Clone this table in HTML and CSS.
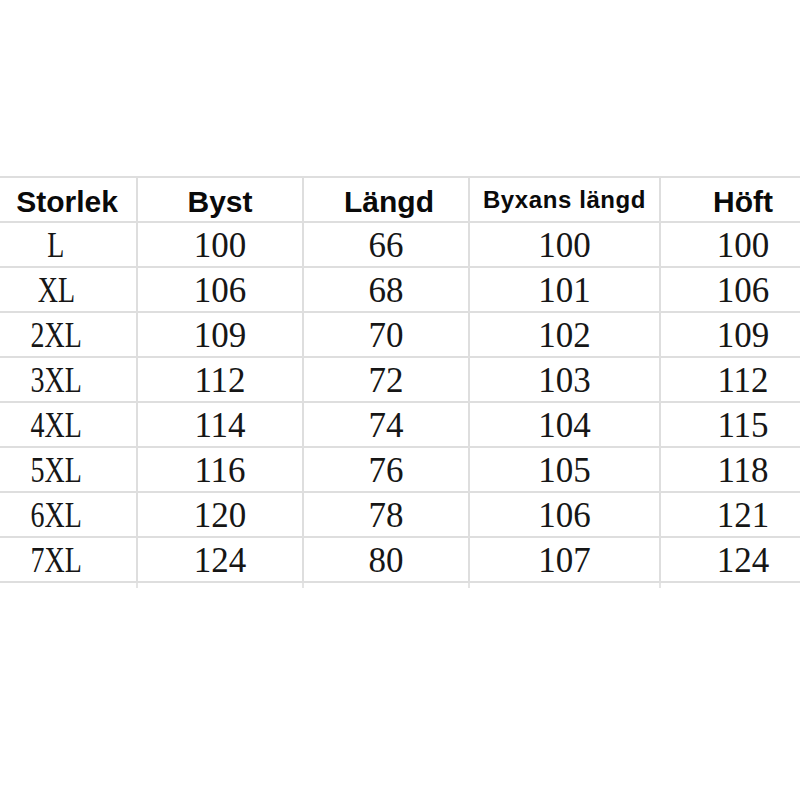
FILE: index.html
```html
<!DOCTYPE html>
<html lang="sv">
<head>
<meta charset="utf-8">
<title>Storlekstabell</title>
<link rel="stylesheet" href="styles.css">
</head>
<body>
<div class="page">
  <div class="sheet">
    <div class="cell head head-storlek">Storlek</div>
    <div class="cell head">Byst</div>
    <div class="cell head head-langd">Längd</div>
    <div class="cell head head-small">Byxans längd</div>
    <div class="cell head">Höft</div>

    <div class="cell val"><span class="size">L</span></div><div class="cell val"><span>100</span></div><div class="cell val"><span>66</span></div><div class="cell val"><span>100</span></div><div class="cell val"><span>100</span></div>
    <div class="cell val"><span class="size">XL</span></div><div class="cell val"><span>106</span></div><div class="cell val"><span>68</span></div><div class="cell val"><span>101</span></div><div class="cell val"><span>106</span></div>
    <div class="cell val"><span class="size">2XL</span></div><div class="cell val"><span>109</span></div><div class="cell val"><span>70</span></div><div class="cell val"><span>102</span></div><div class="cell val"><span>109</span></div>
    <div class="cell val"><span class="size">3XL</span></div><div class="cell val"><span>112</span></div><div class="cell val"><span>72</span></div><div class="cell val"><span>103</span></div><div class="cell val"><span>112</span></div>
    <div class="cell val"><span class="size">4XL</span></div><div class="cell val"><span>114</span></div><div class="cell val"><span>74</span></div><div class="cell val"><span>104</span></div><div class="cell val"><span>115</span></div>
    <div class="cell val"><span class="size">5XL</span></div><div class="cell val"><span>116</span></div><div class="cell val"><span>76</span></div><div class="cell val"><span>105</span></div><div class="cell val"><span>118</span></div>
    <div class="cell val"><span class="size">6XL</span></div><div class="cell val"><span>120</span></div><div class="cell val"><span>78</span></div><div class="cell val"><span>106</span></div><div class="cell val"><span>121</span></div>
    <div class="cell val"><span class="size">7XL</span></div><div class="cell val"><span>124</span></div><div class="cell val"><span>80</span></div><div class="cell val"><span>107</span></div><div class="cell val"><span>124</span></div>

    <div class="tail"></div><div class="tail"></div><div class="tail"></div><div class="tail"></div><div class="tail"></div>
  </div>
</div>
</body>
</html>
```

FILE: styles.css
```css
html, body {
  margin: 0;
  padding: 0;
  background: #ffffff;
}

.page {
  width: 800px;
  height: 800px;
  overflow: hidden;
  padding-top: 176px;
  box-sizing: border-box;
}

.sheet {
  display: grid;
  grid-template-columns: 162px 166px 166px 191px 166px;
  grid-auto-rows: 45px;
  margin-left: -24px;
  width: 851px;
  border-top: 2px solid #dedede;
}

.cell {
  display: flex;
  align-items: center;
  justify-content: center;
  border-right: 2px solid #dedede;
  border-bottom: 2px solid #dedede;
  box-sizing: border-box;
  color: #0a0a0a;
}

.tail {
  height: 5px;
  border-right: 2px solid #e4e4e4;
  box-sizing: border-box;
}

.head {
  font-family: "Liberation Sans", Arial, sans-serif;
  font-weight: bold;
  font-size: 30px;
  line-height: 30px;
  padding-top: 4px;
}

.head-storlek {
  padding-left: 22px;
}

.head-langd {
  padding-left: 6px;
}

.head-small {
  font-size: 24px;
  letter-spacing: 0.6px;
  padding-top: 0;
}

.val {
  font-family: "Liberation Serif", "Times New Roman", serif;
  font-size: 35px;
  line-height: 30px;
  padding-top: 3px;
  color: #161616;
}

.val span {
  display: inline-block;
}

.val .size {
  transform: scaleX(0.8);
}
```
